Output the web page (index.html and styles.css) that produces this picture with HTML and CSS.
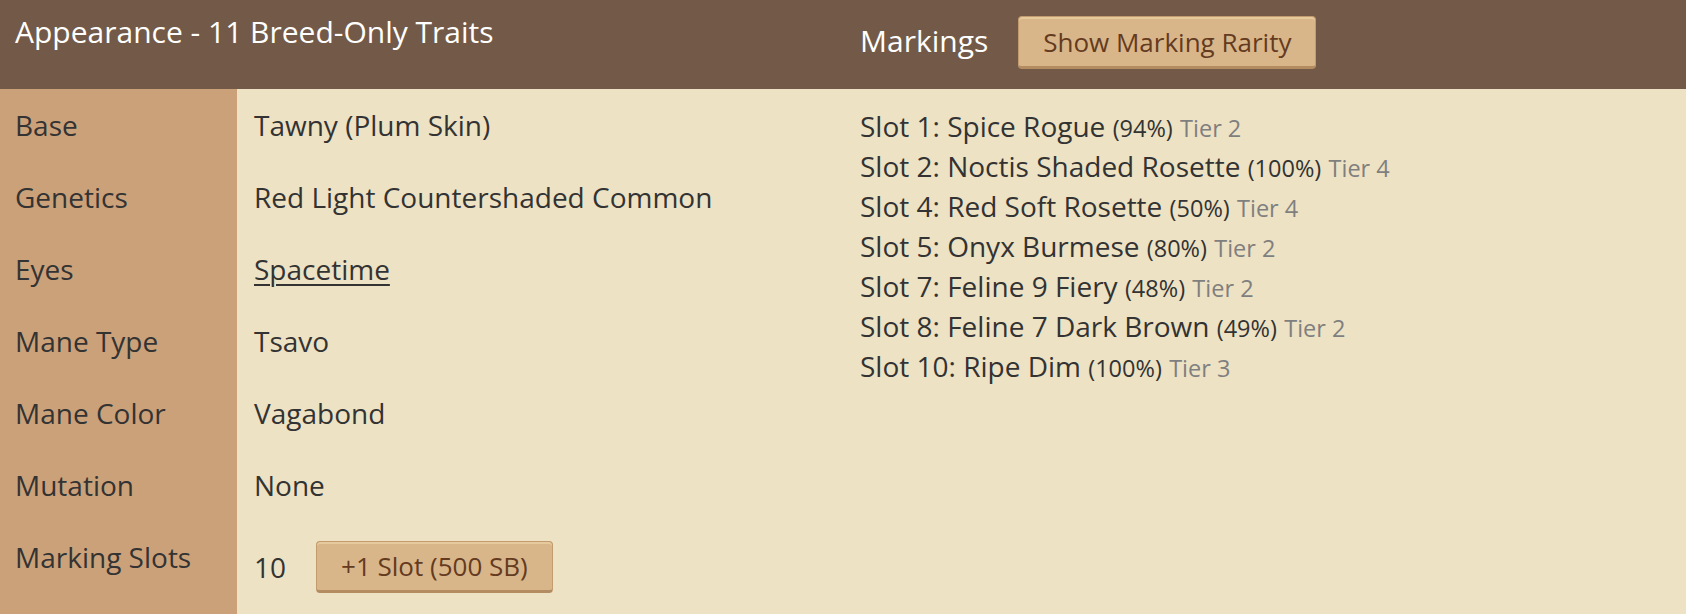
FILE: index.html
```html
<!DOCTYPE html>
<html lang="en">
<head>
<meta charset="utf-8">
<title>Appearance</title>
<link rel="stylesheet" href="styles.css">
</head>
<body>
<div class="panel">
  <section class="col col-traits">
    <div class="head head-left">
      <h2 class="head-title">Appearance - 11 Breed-Only Traits</h2>
    </div>
    <div class="traits">
      <div class="labels">
        <div class="row">Base</div>
        <div class="row">Genetics</div>
        <div class="row">Eyes</div>
        <div class="row">Mane Type</div>
        <div class="row">Mane Color</div>
        <div class="row">Mutation</div>
        <div class="row">Marking Slots</div>
      </div>
      <div class="values">
        <div class="row">Tawny (Plum Skin)</div>
        <div class="row">Red Light Countershaded Common</div>
        <div class="row"><a class="link" href="#">Spacetime</a></div>
        <div class="row">Tsavo</div>
        <div class="row">Vagabond</div>
        <div class="row">None</div>
        <div class="row row-slots"><span>10</span><button class="btn btn-slot">+1 Slot (500 SB)</button></div>
      </div>
    </div>
  </section>
  <section class="col col-markings">
    <div class="head head-right">
      <h2 class="head-title">Markings</h2>
      <button class="btn btn-head">Show Marking Rarity</button>
    </div>
    <ul class="markings">
      <li>Slot 1: Spice Rogue <span class="pct">(94%)</span> <span class="tier">Tier 2</span></li>
      <li>Slot 2: Noctis Shaded Rosette <span class="pct">(100%)</span> <span class="tier">Tier 4</span></li>
      <li>Slot 4: Red Soft Rosette <span class="pct">(50%)</span> <span class="tier">Tier 4</span></li>
      <li>Slot 5: Onyx Burmese <span class="pct">(80%)</span> <span class="tier">Tier 2</span></li>
      <li>Slot 7: Feline 9 Fiery <span class="pct">(48%)</span> <span class="tier">Tier 2</span></li>
      <li>Slot 8: Feline 7 Dark Brown <span class="pct">(49%)</span> <span class="tier">Tier 2</span></li>
      <li>Slot 10: Ripe Dim <span class="pct">(100%)</span> <span class="tier">Tier 3</span></li>
    </ul>
  </section>
</div>
</body>
</html>
```

FILE: styles.css
```css
html, body {
  margin: 0;
  height: 100%;
}
body {
  background: #ede2c4;
  color: #333333;
  font-family: "Open Sans", "Liberation Sans", sans-serif;
  font-size: 28px;
}
.panel {
  display: flex;
  min-height: 100%;
}
.col {
  display: flex;
  flex-direction: column;
}
.col-traits {
  width: 860px;
  flex: none;
}
.col-markings {
  flex: 1;
}
.head {
  height: 89px;
  box-sizing: border-box;
  background: #735a48;
  color: #ffffff;
  flex: none;
}
.head-title {
  margin: 0;
  font-size: 30px;
  font-weight: 400;
  line-height: 45px;
}
.head-left {
  padding: 9px 15px 0;
}
.head-right {
  display: flex;
  align-items: flex-start;
  gap: 30px;
  padding: 16px 0 0;
}
.head-right .head-title {
  margin-top: 2px;
}
.traits {
  flex: 1;
  display: flex;
}
.labels {
  width: 237px;
  box-sizing: border-box;
  background: #cba17a;
  padding-left: 15px;
}
.values {
  flex: 1;
  padding-left: 17px;
}
.row {
  padding: 18px 0;
  line-height: 36px;
  white-space: nowrap;
}
.row-slots {
  display: flex;
  align-items: center;
  gap: 30px;
  padding: 20px 0 0;
}
.link {
  color: #333333;
  text-decoration: underline;
  text-underline-offset: 4px;
  text-decoration-thickness: 2px;
}
.btn {
  font-family: "Open Sans", "Liberation Sans", sans-serif;
  font-size: 26px;
  color: #643b1f;
  background: #d9b68a;
  border: 1px solid #c29b6e;
  border-bottom: 3px solid #b48c62;
  border-radius: 4px;
  box-shadow: inset 0 2px 0 #e6ca9e;
  padding: 0 24px;
  line-height: 36px;
  cursor: pointer;
}
.btn-head {
  height: 53px;
}
.btn-slot {
  height: 52px;
}
.markings {
  list-style: none;
  margin: 0;
  padding: 17px 0 0;
}
.markings li {
  line-height: 40px;
  white-space: nowrap;
}
.pct,
.tier {
  font-size: 23.5px;
  line-height: 1;
}
.tier {
  color: #7f7f7f;
}
```
